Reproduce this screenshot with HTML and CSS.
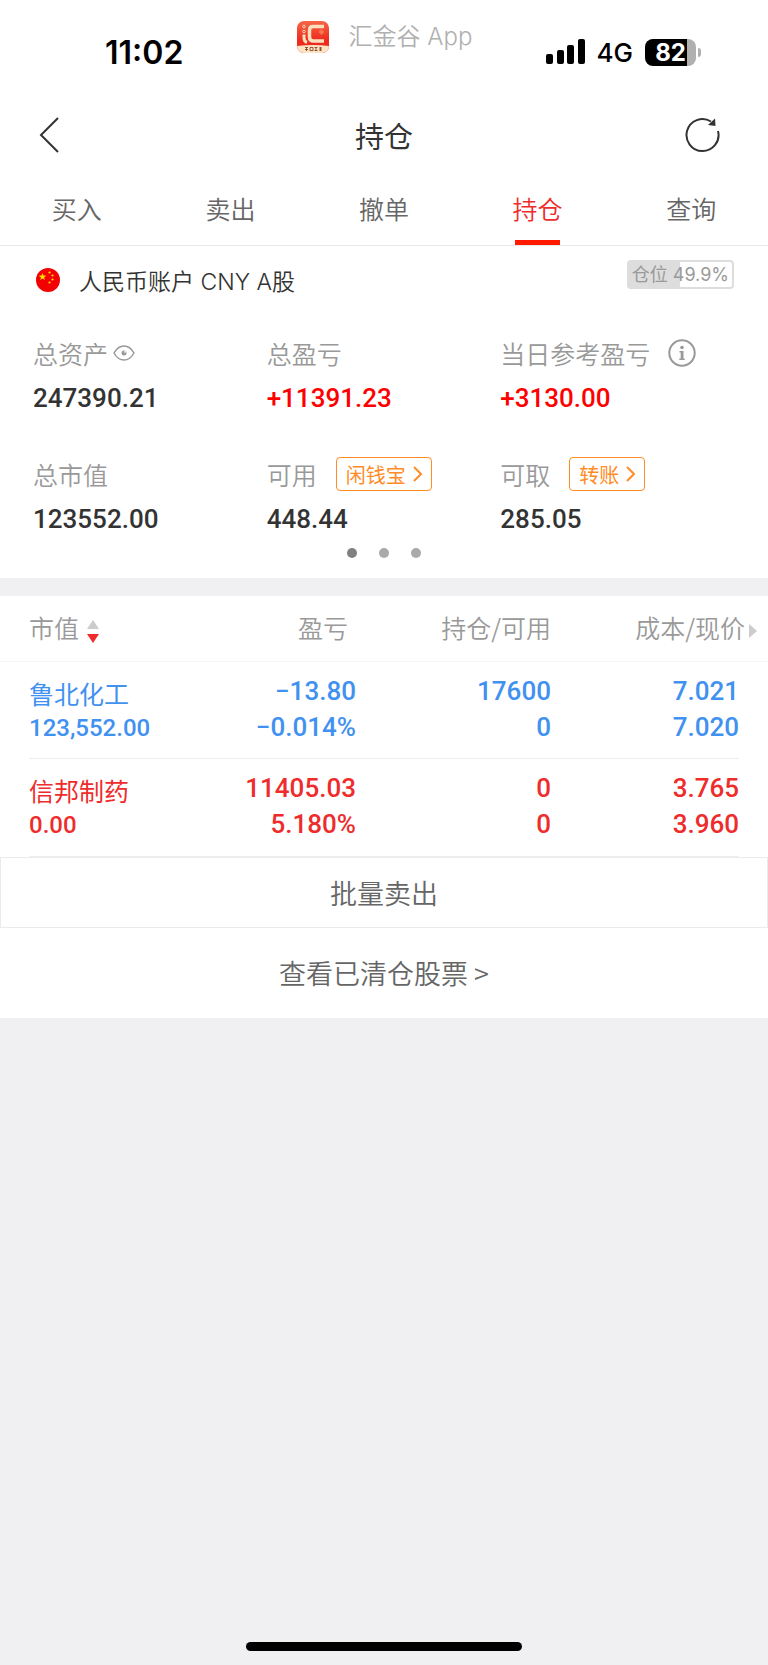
FILE: index.html
```html
<!DOCTYPE html>
<html lang="zh-CN">
<head>
    <meta charset="utf-8">
    <meta name="viewport" content="width=device-width, initial-scale=1">
    <title>持仓</title>
    <link rel="stylesheet" href="styles.css">
</head>
<body>
    <div class="status-bar">
        <div class="time">11:02</div>
        <div class="app-name">
            <svg width="34" height="34" viewBox="0 0 34 34">
                <defs>
                    <linearGradient id="logoRed" x1="0" y1="0" x2="0" y2="1">
                        <stop offset="0" stop-color="#f8694a"/>
                        <stop offset="0.6" stop-color="#ee2a1e"/>
                    </linearGradient>
                    <clipPath id="logoClip"><rect x="1" y="1" width="32" height="32" rx="7"/></clipPath>
                </defs>
                <g clip-path="url(#logoClip)">
                    <rect width="34" height="34" fill="url(#logoRed)"/>
                    <path d="M0 26 Q17 24 34 26 V34 H0 Z" fill="#fbe3c4"/>
                </g>
                <g fill="none" stroke="#fbe0bd">
                    <circle cx="8" cy="6.500" r="1.300"/>
                    <circle cx="8" cy="11.500" r="1.300"/>
                    <path d="M8 14.500v3q0 4 3 5" stroke-width="3"/>
                    <path d="M28 6.500H17q-3.500 0-3.500 3.500v7q0 4 4 4H28" stroke-width="3.500"/>
                </g>
                <path d="M25.500 9l3 3-3 3-3-3z" fill="#f4774f"/>
                <path d="M9 27.500h3M9 29.500h3M10.500 27v4M14 27.500h3v3h-3zM18.500 27.500h3M18.500 30.500h3M20 27v4M23 28h3M23 30h3M24.500 27v4" fill="none" stroke="#8a4b2c" stroke-width="0.900"/>
            </svg>
            <span>汇金谷 App</span>
        </div>
        <div class="status-icons">
            <svg width="39" height="26" viewBox="0 0 39 26">
                <rect x="0" y="15" width="7" height="10" rx="2"/>
                <rect x="11" y="11" width="7" height="14" rx="2"/>
                <rect x="21" y="6" width="7" height="19" rx="2"/>
                <rect x="32" y="0" width="7" height="25" rx="2"/>
            </svg>
            <span class="network">4G</span>
            <div class="battery"><span class="battery-level">82</span></div>
        </div>
    </div>

    <header class="nav-bar">
        <button class="icon-button back" aria-label="返回">
            <svg width="20" height="36" viewBox="0 0 20 36" fill="none" stroke="#333" stroke-width="2">
                <path d="M19 1 L2 18 L19 35"/>
            </svg>
        </button>
        <h1>持仓</h1>
        <button class="icon-button" aria-label="刷新">
            <svg width="36" height="36" viewBox="0 0 36 36">
                <path d="M34 14 A16 16 0 1 1 27 4.500" fill="none" stroke="#333" stroke-width="2"/>
                <path d="M31 1.500 L31.500 9 L24 8 Z" fill="#333"/>
            </svg>
        </button>
    </header>

    <nav class="tabs">
        <a href="#buy">买入</a>
        <a href="#sell">卖出</a>
        <a href="#cancel">撤单</a>
        <a href="#hold" class="active">持仓</a>
        <a href="#query">查询</a>
    </nav>

    <section class="account">
        <div class="account-head">
            <svg width="24" height="24" viewBox="0 0 24 24">
                <circle cx="12" cy="12" r="12" fill="#f30000"/>
                <path d="M6.500 5l1 2.600 2.800.1-2.200 1.700.8 2.700-2.400-1.500-2.300 1.500.8-2.700-2.200-1.700 2.800-.1z" fill="#ffde00"/>
                <g fill="#ffde00">
                    <circle cx="13.500" cy="4.500" r="1.100"/>
                    <circle cx="16.500" cy="7.500" r="1.100"/>
                    <circle cx="16.500" cy="11.500" r="1.100"/>
                    <circle cx="13.500" cy="14.500" r="1.100"/>
                </g>
            </svg>
            <span class="account-name">人民币账户 CNY A股</span>
            <span class="position-badge">仓位 49.9%</span>
        </div>

        <div class="summary">
            <div class="item">
                <div class="item-label">总资产
                    <svg class="eye" width="22" height="16" viewBox="0 0 22 16" fill="none" stroke="#999" stroke-width="1.500">
                        <path d="M1 8 Q5 1 11 1 T21 8 Q17 15 11 15 T1 8 Z"/>
                        <circle cx="11" cy="8" r="2.500" fill="#999" stroke="none"/>
                        <circle cx="12" cy="6.800" r="0.900" fill="#fff" stroke="none"/>
                    </svg>
                </div>
                <div class="item-value">247390.21</div>
            </div>
            <div class="item">
                <div class="item-label">总盈亏</div>
                <div class="item-value up">+11391.23</div>
            </div>
            <div class="item">
                <div class="item-label">当日参考盈亏
                    <svg class="info" width="28" height="28" viewBox="0 0 28 28">
                        <circle cx="14" cy="14" r="12.700" fill="none" stroke="#999" stroke-width="2"/>
                        <circle cx="14" cy="8.500" r="1.800" fill="#999"/>
                        <path d="M11.500 12h4v7.500h1.200v1.500h-5.400v-1.500h1.400v-6h-1.200z" fill="#999"/>
                    </svg>
                </div>
                <div class="item-value up">+3130.00</div>
            </div>
            <div class="item">
                <div class="item-label">总市值</div>
                <div class="item-value">123552.00</div>
            </div>
            <div class="item">
                <div class="item-label">可用
                    <button class="tag">闲钱宝
                        <svg width="9" height="16" viewBox="0 0 9 16"><path d="M1 1l7 7-7 7"/></svg>
                    </button>
                </div>
                <div class="item-value">448.44</div>
            </div>
            <div class="item">
                <div class="item-label">可取
                    <button class="tag">转账
                        <svg width="9" height="16" viewBox="0 0 9 16"><path d="M1 1l7 7-7 7"/></svg>
                    </button>
                </div>
                <div class="item-value">285.05</div>
            </div>
        </div>

        <div class="dots">
            <span class="dot current"></span>
            <span class="dot"></span>
            <span class="dot"></span>
        </div>
    </section>

    <section class="holdings">
        <table>
            <thead>
                <tr>
                    <th class="col-name">市值
                        <svg class="sort" width="12" height="23" viewBox="0 0 12 23">
                            <path d="M6 0l6 9H0z" fill="#ccc"/>
                            <path d="M6 23l6-9H0z" fill="#ee2c2c"/>
                        </svg>
                    </th>
                    <th class="col-profit">盈亏</th>
                    <th class="col-amount">持仓/可用</th>
                    <th class="col-price">成本/现价<svg class="more" width="8" height="14" viewBox="0 0 8 14"><path d="M0 0l8 7-8 7z" fill="#ccc"/></svg></th>
                </tr>
            </thead>
            <tbody>
                <tr class="blue">
                    <td><div class="stock">鲁北化工</div><div class="market-value">123,552.00</div></td>
                    <td><div>−13.80</div><div>−0.014%</div></td>
                    <td><div>17600</div><div>0</div></td>
                    <td><div>7.021</div><div>7.020</div></td>
                </tr>
                <tr class="red">
                    <td><div class="stock">信邦制药</div><div class="market-value">0.00</div></td>
                    <td><div>11405.03</div><div>5.180%</div></td>
                    <td><div>0</div><div>0</div></td>
                    <td><div>3.765</div><div>3.960</div></td>
                </tr>
            </tbody>
        </table>
        <button class="batch-sell">批量卖出</button>
        <a class="cleared" href="#cleared">查看已清仓股票 &gt;</a>
    </section>

    <div class="home-indicator"></div>
</body>
</html>
```

FILE: styles.css
```css
* {
    box-sizing: border-box;
}

body {
    margin: 0;
    min-height: 100vh;
    display: flex;
    flex-direction: column;
    background: #f0f0f2;
    color: #333;
    font-family: "Noto Sans CJK SC", sans-serif;
    font-weight: 350;
}

button {
    margin: 0;
    padding: 0;
    border: none;
    background: none;
    font-family: inherit;
    font-weight: inherit;
    cursor: pointer;
}

a {
    color: inherit;
    text-decoration: none;
}

svg {
    display: block;
    flex: none;
}

/* status bar */
.status-bar {
    display: grid;
    grid-template-columns: 1fr auto 1fr;
    align-items: center;
    height: 104px;
    padding: 0 67px;
    background: #fff;
    color: #000;
    font-family: Inter, "Noto Sans CJK SC", sans-serif;
}

.time {
    padding-left: 38px;
    font-size: 32px;
    font-weight: 600;
}

.app-name {
    display: flex;
    align-items: center;
    gap: 19px;
    padding-bottom: 30px;
    color: #b0b0b0;
    font-size: 24px;
    line-height: 36px;
}

.status-icons {
    display: flex;
    align-items: center;
    justify-content: flex-end;
    gap: 12px;
}

.network {
    font-size: 26px;
    font-weight: 500;
}

.battery {
    position: relative;
    width: 51px;
    height: 27px;
    margin-right: 5px;
    border-radius: 8px;
    background: linear-gradient(to right, #000 82%, #b0b0b0 82%);
    color: #fff;
    font-size: 24px;
    font-weight: 700;
    line-height: 27px;
    text-align: center;
}

.battery::after {
    content: "";
    position: absolute;
    top: 9px;
    right: -5px;
    width: 3px;
    height: 9px;
    border-radius: 0 4px 4px 0;
    background: #b0b0b0;
}

/* title */
.nav-bar {
    display: flex;
    align-items: center;
    justify-content: space-between;
    height: 62px;
    padding: 0 48px 0 39px;
    background: #fff;
}

.nav-bar h1 {
    margin: 0;
    font-size: 29px;
    font-weight: 400;
    line-height: 40px;
}

.icon-button {
    display: flex;
    width: 36px;
}

.back {
    width: 45px;
}

/* tabs */
.tabs {
    display: flex;
    height: 80px;
    border-bottom: 1px solid #e8e8e8;
    background: #fff;
    color: #666;
    font-size: 25px;
    line-height: 84px;
}

.tabs a {
    display: flex;
    flex: 1;
    flex-direction: column;
    align-items: center;
    height: 79px;
}

.tabs .active {
    color: #ee2c2c;
}

.tabs .active::after {
    content: "";
    width: 45px;
    height: 5px;
    margin-top: -10px;
    background: #ff1a00;
}

/* account */
.account {
    padding: 14px 34px 20px 33px;
    background: #fff;
}

.account-head {
    display: flex;
    align-items: center;
    height: 40px;
    padding-left: 3px;
}

.account-name {
    margin-left: 19px;
    font-family: Inter, "Noto Sans CJK SC", sans-serif;
    font-size: 23px;
}

.position-badge {
    align-self: flex-start;
    height: 29px;
    margin-left: auto;
    padding: 0 3px;
    border: 2px solid #ddd;
    border-radius: 4px;
    background: linear-gradient(to right, #ddd 50%, #fff 50%);
    color: #999;
    font-family: Inter, "Noto Sans CJK SC", sans-serif;
    font-size: 18px;
    font-weight: 400;
    line-height: 25px;
}

.summary {
    display: grid;
    grid-template-columns: 1fr 1fr 1fr;
    row-gap: 31px;
    margin-top: 30px;
}

.item-label {
    display: flex;
    align-items: center;
    height: 46px;
    color: #999;
    font-size: 25px;
}

.item-value {
    height: 44px;
    font-family: Roboto, sans-serif;
    font-size: 26px;
    font-weight: 500;
    line-height: 44px;
}

.up {
    color: #f00;
}

.eye {
    margin-left: 5px;
}

.info {
    margin-left: 18px;
}

.tag {
    display: flex;
    align-items: center;
    gap: 7px;
    height: 34px;
    margin-left: 19px;
    padding: 0 9px;
    border: 1px solid #ff8c26;
    border-radius: 4px;
    color: #ff8c26;
    font-size: 20px;
    font-weight: 400;
}

.tag path {
    fill: none;
    stroke: #ff8c26;
    stroke-width: 2;
}

.dots {
    display: flex;
    justify-content: center;
    gap: 22px;
    margin-top: 7px;
}

.dot {
    width: 10px;
    height: 10px;
    border-radius: 50%;
    background: #aaa;
}

.dot.current {
    background: #808080;
}

/* holdings */
.holdings {
    margin-top: 18px;
    background: #fff;
}

table {
    width: 100%;
    border-collapse: collapse;
    table-layout: fixed;
}

th {
    height: 65px;
    padding: 0 2px 2px 0;
    border-bottom: 1px solid #f5f5f5;
    color: #999;
    font-size: 25px;
    font-weight: inherit;
    text-align: right;
}

.col-name {
    width: 25%;
    padding-left: 29px;
    text-align: left;
}

.col-profit {
    width: 22%;
    padding-right: 13px;
}

.col-amount {
    width: 25%;
}

.col-price {
    width: 28%;
    padding-right: 11px;
}

.sort,
.more {
    display: inline-block;
    vertical-align: middle;
}

.sort {
    margin-left: 2px;
}

.more {
    margin-left: 4px;
}

tbody tr {
    background: linear-gradient(#eee, #eee) center bottom / calc(100% - 58px) 1px no-repeat;
}

td {
    height: 98px;
    padding: 11px 2px 14px 0;
    font-family: Roboto, "Noto Sans CJK SC", sans-serif;
    font-size: 26px;
    font-weight: 500;
    line-height: 36px;
    text-align: right;
    vertical-align: top;
}

td:first-child {
    padding-left: 29px;
    text-align: left;
}

td:nth-child(2) {
    padding-right: 5px;
}

td:last-child {
    padding-right: 29px;
}

.stock {
    padding-top: 7px;
    font-size: 25px;
    font-weight: 400;
    line-height: 32px;
}

.market-value {
    font-size: 24px;
    line-height: 32px;
}

.blue {
    color: #4191f0;
}

.red {
    color: #ee2c2c;
}

.batch-sell {
    display: block;
    width: 100%;
    height: 71px;
    border: 1px solid #ebebeb;
    color: #666;
    font-size: 27px;
}

.cleared {
    display: block;
    height: 90px;
    color: #666;
    font-size: 27px;
    line-height: 90px;
    text-align: center;
}

.home-indicator {
    width: 36%;
    height: 9px;
    margin: auto auto 14px;
    border-radius: 5px;
    background: #000;
}
```
